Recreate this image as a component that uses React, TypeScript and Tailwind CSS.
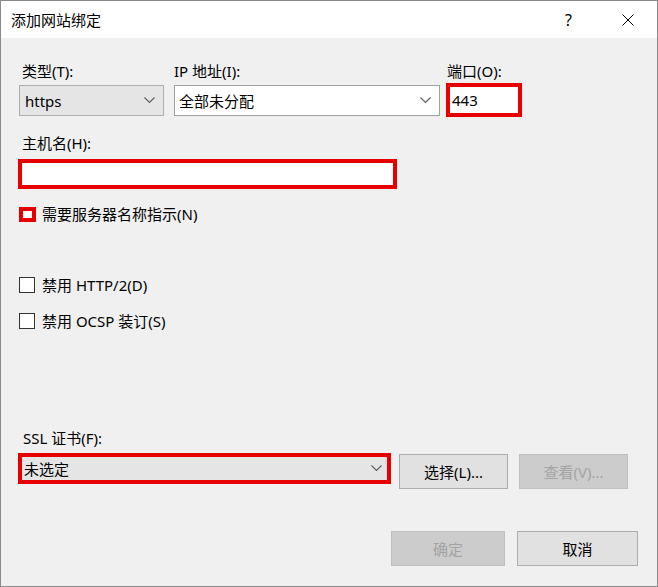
import React from "react";

const font = {
  fontFamily: "'Noto Sans', 'Noto Sans CJK SC', sans-serif",
};

function Chevron() {
  return (
    <svg width="11" height="7" viewBox="0 0 11 7" className="shrink-0">
      <polyline points="0.5,0.5 5.5,5.5 10.5,0.5" fill="none" stroke="#606060" strokeWidth="1.2" />
    </svg>
  );
}

function Checkbox({ label, highlight }: { label: string; highlight?: boolean }) {
  return (
    <div className="flex items-center h-5">
      {highlight ? (
        <div className="ml-[1px] w-[17px] h-[15px] border-[4px] border-[#e60000] bg-white" />
      ) : (
        <div className="ml-[1px] w-[16px] h-[16px] border border-[#333333] bg-white" />
      )}
      <span className={highlight ? "ml-[6px]" : "ml-[7px]"}>{label}</span>
    </div>
  );
}

export default function App() {
  return (
    <div
      className="w-[658px] h-[587px] border border-[#8a8a8a] bg-[#f0f0f0] flex flex-col text-[15px] leading-[20px] text-black"
      style={font}
    >
      {/* title bar */}
      <div className="h-[37px] bg-white flex items-center pl-[10px]">
        <span>添加网站绑定</span>
        <span className="ml-auto mr-[50px] text-[16px]">?</span>
        <svg width="12" height="12" viewBox="0 0 12 12" className="mr-[23px]">
          <line x1="0.5" y1="0.5" x2="11.5" y2="11.5" stroke="#000" strokeWidth="1" />
          <line x1="11.5" y1="0.5" x2="0.5" y2="11.5" stroke="#000" strokeWidth="1" />
        </svg>
      </div>

      <div className="flex flex-col pl-[17px] pr-[19px]">
        {/* type / ip / port */}
        <div className="flex mt-[23px]">
          <div className="w-[145px] pl-[4px]">类型(T):</div>
          <div className="w-[265px] ml-[11px]">IP 地址(I):</div>
          <div className="ml-[8px]">端口(O):</div>
        </div>
        <div className="flex items-start mt-[2px]">
          <div className="mt-[2px] ml-[1px] w-[145px] h-[31px] bg-[#e5e5e5] border border-[#adadad] flex items-center pl-[5px] pr-[8px]">
            <span>https</span>
            <span className="ml-auto">
              <Chevron />
            </span>
          </div>
          <div className="mt-[2px] ml-[10px] w-[266px] h-[31px] bg-white border border-[#a0a0a0] flex items-center pl-[4px] pr-[8px]">
            <span>全部未分配</span>
            <span className="ml-auto">
              <Chevron />
            </span>
          </div>
          <div className="ml-[6px] w-[76px] h-[34px] border-[4px] border-[#e60000] bg-white flex items-center pl-[2px]">
            443
          </div>
        </div>

        {/* host */}
        <div className="mt-[16px] pl-[4px]">主机名(H):</div>
        <div className="mt-[6px] w-[379px] h-[30px] border-[4px] border-[#e60000] bg-white" />

        <div className="mt-[15px]">
          <Checkbox label="需要服务器名称指示(N)" highlight />
        </div>
        <div className="mt-[51px]">
          <Checkbox label="禁用 HTTP/2(D)" />
        </div>
        <div className="mt-[16px]">
          <Checkbox label="禁用 OCSP 装订(S)" />
        </div>

        {/* ssl */}
        <div className="mt-[97px] pl-[5px]">SSL 证书(F):</div>
        <div className="flex items-start mt-[5px]">
          <div className="w-[373px] h-[31px] border-[4px] border-[#e60000] bg-[#e5e5e5] flex items-center pl-[2px] pr-[5px]">
            <span>未选定</span>
            <span className="ml-auto">
              <Chevron />
            </span>
          </div>
          <button className="mt-[1px] ml-[8px] w-[109px] h-[35px] bg-[#e1e1e1] border border-[#adadad]">
            选择(L)...
          </button>
          <button className="mt-[1px] ml-[11px] w-[109px] h-[35px] bg-[#cccccc] border border-[#bfbfbf] text-[#a3a3a3]">
            查看(V)...
          </button>
        </div>

        {/* ok / cancel */}
        <div className="flex justify-end mt-[42px]">
          <button className="w-[114px] h-[35px] bg-[#cccccc] border border-[#bfbfbf] text-[#a3a3a3]">
            确定
          </button>
          <button className="ml-[12px] w-[121px] h-[35px] bg-[#e1e1e1] border border-[#adadad]">
            取消
          </button>
        </div>
      </div>
    </div>
  );
}
